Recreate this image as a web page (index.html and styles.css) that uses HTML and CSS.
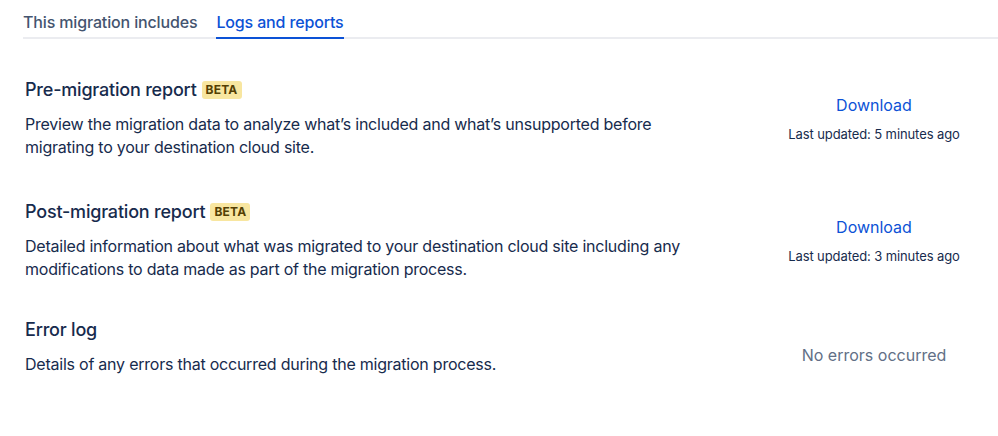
FILE: index.html
```html
<!DOCTYPE html>
<html lang="en">
<head>
<meta charset="utf-8">
<title>Logs and reports</title>
<link rel="stylesheet" href="styles.css">
</head>
<body>
<nav class="tabs">
  <div class="tab">This migration includes</div>
  <div class="tab tab-active">Logs and reports</div>
</nav>
<main class="sections">
  <section class="row">
    <div class="info">
      <h2 class="title">Pre-migration report <span class="badge">BETA</span></h2>
      <p class="desc">Preview the migration data to analyze what’s included and what’s unsupported before migrating to your destination cloud site.</p>
    </div>
    <div class="action">
      <a class="download" href="#">Download</a>
      <div class="updated">Last updated: 5 minutes ago</div>
    </div>
  </section>
  <section class="row row-tight">
    <div class="info">
      <h2 class="title">Post-migration report <span class="badge">BETA</span></h2>
      <p class="desc">Detailed information about what was migrated to your destination cloud site including any modifications to data made as part of the migration process.</p>
    </div>
    <div class="action">
      <a class="download" href="#">Download</a>
      <div class="updated">Last updated: 3 minutes ago</div>
    </div>
  </section>
  <section class="row">
    <div class="info">
      <h2 class="title">Error log</h2>
      <p class="desc">Details of any errors that occurred during the migration process.</p>
    </div>
    <div class="action action-plain">
      <div class="none">No errors occurred</div>
    </div>
  </section>
</main>
</body>
</html>
```
FILE: styles.css
```css
* { box-sizing: border-box; }
body {
  margin: 0;
  font-family: Inter, "Noto Sans", "Liberation Sans", sans-serif;
  color: #172B4D;
  background: #fff;
}
.tabs {
  display: flex;
  gap: 19px;
  margin-left: 23px;
  border-bottom: 2px solid #EBECF0;
}
.tab {
  font-size: 16px;
  letter-spacing: -0.15px;
  line-height: 24px;
  padding: 10px 0 3px;
  color: #44546F;
  font-weight: 500;
}
.tab-active {
  color: #0C52D6;
  border-bottom: 2px solid #0C52D6;
  margin-bottom: -2px;
}
.sections {
  padding-left: 25px;
  padding-top: 37px;
}
.row {
  display: flex;
  align-items: center;
  margin-bottom: 40px;
}
.row-tight { margin-bottom: 36px; }
.info {
  width: 725px;
}
.title {
  margin: 0;
  font-size: 18px;
  letter-spacing: -0.2px;
  line-height: 28px;
  font-weight: 500;
  display: flex;
  align-items: center;
  gap: 5px;
}
.badge {
  background: #F8E6A0;
  color: #533F04;
  font-size: 12px;
  font-weight: 700;
  line-height: 18px;
  padding: 0 4px;
  border-radius: 3px;
  letter-spacing: 0.2px;
}
.desc {
  margin: 9px 0 0;
  max-width: 680px;
  font-size: 16px;
  letter-spacing: -0.23px;
  line-height: 22.5px;
}
.action {
  flex: 1;
  text-align: center;
  padding-top: 1px;
}
.action-plain {
  align-self: flex-start;
  padding-top: 27px;
}
.download {
  display: block;
  color: #0C52D6;
  text-decoration: none;
  font-size: 16px;
  line-height: 24px;
}
.updated {
  margin-top: 8px;
  font-size: 13px;
  letter-spacing: -0.1px;
  line-height: 18px;
}
.none {
  font-size: 16px;
  line-height: 24px;
  color: #626F86;
}
```
